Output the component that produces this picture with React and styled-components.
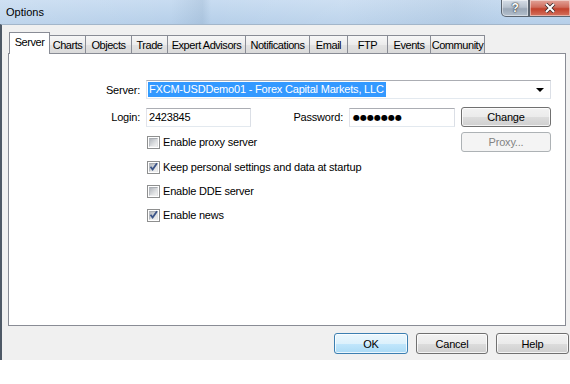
import React from 'react'
import styled, { createGlobalStyle } from 'styled-components'

const GlobalStyle = createGlobalStyle`
  html, body {
    margin: 0;
    background: #fff;
  }
  body {
    font-family: "Liberation Sans", Arial, sans-serif;
    font-size: 11px;
    letter-spacing: -0.2px;
    color: #000;
  }
`

const Window = styled.div`
  width: 570px;
  height: 360px;
  display: flex;
  flex-direction: column;
  overflow: hidden;
`

const TitleBar = styled.div`
  height: 24px;
  flex: none;
  display: flex;
  align-items: flex-start;
  background:
    linear-gradient(90deg, rgba(255,255,255,0.12) 0%, rgba(255,255,255,0) 30%,
      rgba(110,140,170,0.18) 35.5%, rgba(255,255,255,0) 37%, rgba(255,255,255,0.1) 60%,
      rgba(150,170,190,0.12) 80%, rgba(255,255,255,0) 90%),
    linear-gradient(#c8dcf1, #b6cfe9);
`

const Title = styled.div`
  padding: 6px 0 0 6px;
  letter-spacing: 0;
`

const CaptionButtons = styled.div`
  margin-left: auto;
  display: flex;
`

const CaptionButton = styled.div`
  width: ${p => p.$w}px;
  height: 17px;
  box-sizing: border-box;
  display: flex;
  align-items: center;
  justify-content: center;
  border: 1px solid #5b6570;
  border-top: none;
  border-radius: ${p => (p.$close ? '0' : '0 0 0 5px')};
  border-right: ${p => (p.$close ? 'none' : '1px solid #5b6570')};
  background: ${p =>
    p.$close
      ? 'linear-gradient(#e2a49a, #cf6c5c 45%, #c2412c 55%, #d5735f)'
      : 'linear-gradient(#d6dee8, #b7c2ce 45%, #9ba8b7 55%, #b4c0cd)'};
  box-shadow: inset 0 0 0 1px rgba(255,255,255,0.45);
  color: #fff;
  font-weight: bold;
  font-size: 12px;
  text-shadow: 0 0 2px #333, 0 0 1px #000;
`

const Body = styled.div`
  flex: 1;
  background: #f0f0f0;
  border-left: 2px solid #4e5966;
  border-top: 1px solid #a3b6ca;
  padding: 7px 0 0 6px;
  display: flex;
  flex-direction: column;
`

const TabStrip = styled.div`
  height: 21px;
  display: flex;
  align-items: flex-end;
  padding-left: 1px;
`

const Tab = styled.div`
  position: relative;
  z-index: ${p => (p.$active ? 2 : 0)};
  width: ${p => p.$w}px;
  height: ${p => (p.$active ? 22 : 18)}px;
  margin-right: -1px;
  margin-bottom: ${p => (p.$active ? '-1px' : '0')};
  padding-bottom: ${p => (p.$active ? '3px' : '0')};
  box-sizing: border-box;
  display: flex;
  align-items: center;
  justify-content: center;
  letter-spacing: -0.45px;
  white-space: nowrap;
  border: 1px solid #898c95;
  border-bottom: none;
  background: ${p =>
    p.$active ? '#fff' : 'linear-gradient(#f7f7f7, #ececec 50%, #e2e2e2 50%, #dadada)'};
`

const Panel = styled.div`
  position: relative;
  z-index: 1;
  width: 558px;
  height: 273px;
  box-sizing: border-box;
  border: 1px solid #898c95;
  background: #fff;
  padding: 26px 14px 0 0;
  display: flex;
  flex-direction: column;
`

const Row = styled.div`
  display: flex;
  align-items: center;
  height: ${p => p.$h || 20}px;
  margin-top: ${p => p.$mt || 0}px;
  padding-left: ${p => p.$pl || 0}px;
`

const Label = styled.div`
  flex: none;
  width: ${p => p.$w}px;
  margin-right: 6px;
  text-align: right;
`

const Combo = styled.div`
  flex: 1;
  height: 19px;
  box-sizing: border-box;
  border: 1px solid #abadb3;
  border-color: #abadb3 #dbdfe6 #e3e9ef #e2e3ea;
  background: #fff;
  display: flex;
  align-items: center;
  padding: 0 6px 0 1px;
`

const Selection = styled.span`
  background: #3399ff;
  color: #fff;
  padding: 1px 2px 2px 1px;
  line-height: 12px;
`

const Arrow = styled.span`
  margin-left: auto;
  width: 0;
  height: 0;
  border-left: 4px solid transparent;
  border-right: 4px solid transparent;
  border-top: 4px solid #000;
`

const Input = styled.div`
  flex: none;
  width: ${p => p.$w}px;
  height: 19px;
  box-sizing: border-box;
  border: 1px solid #abadb3;
  border-color: #abadb3 #dbdfe6 #e3e9ef #e2e3ea;
  background: #fff;
  display: flex;
  align-items: center;
  padding-left: ${p => p.$pad || 2}px;
`

const Dots = styled.span`
  font-family: "DejaVu Sans", sans-serif;
  font-size: 8px;
  letter-spacing: 0;
`

const Button = styled.button`
  flex: none;
  width: ${p => p.$w}px;
  height: ${p => p.$h || 21}px;
  margin-left: ${p => (p.$push ? 'auto' : `${p.$ml || 0}px`)};
  box-sizing: border-box;
  padding: 0;
  font: inherit;
  letter-spacing: inherit;
  color: ${p => (p.disabled ? '#838383' : '#000')};
  border: 1px solid ${p => (p.disabled ? '#adb2b5' : p.$primary ? '#3c7fb1' : '#707070')};
  border-radius: 3px;
  background: ${p =>
    p.disabled
      ? '#f4f4f4'
      : p.$primary
        ? 'linear-gradient(#ecf7fd, #dcf1fc 50%, #c2e7fc 50%, #abdaf5)'
        : 'linear-gradient(#f2f2f2, #ebebeb 50%, #dddddd 50%, #cfcfcf)'};
  box-shadow: ${p => (p.disabled ? 'none' : 'inset 0 0 0 1px rgba(255,255,255,0.75)')};
`

const CheckItem = styled.label`
  display: flex;
  align-items: center;
  gap: 3px;
`

const Box = styled.span`
  width: 13px;
  height: 13px;
  box-sizing: border-box;
  border: 1px solid #8e8f8f;
  background: #fff;
  padding: 1px;
  display: flex;
`

const BoxInner = styled.span`
  flex: 1;
  position: relative;
  background: linear-gradient(135deg, #b3b7bd, #dcdee0 60%, #f1f1f1);
  border: 1px solid #c6c9cc;
  border-color: #a9adb3 #e0e1e3 #ededee #b8bcc1;
`

const Mark = styled.svg`
  position: absolute;
  left: -2px;
  top: -3px;
`

const Footer = styled.div`
  display: flex;
  justify-content: flex-end;
  gap: 8px;
  margin-top: 7px;
  padding-right: 1px;
`

const tabs = [
  ['Server', 41],
  ['Charts', 37],
  ['Objects', 47],
  ['Trade', 37],
  ['Expert Advisors', 79],
  ['Notifications', 65],
  ['Email', 39],
  ['FTP', 41],
  ['Events', 44],
  ['Community', 55],
]

function Check({ checked, children }) {
  return (
    <CheckItem>
      <Box>
        <BoxInner>
          {checked && (
            <Mark width="11" height="11" viewBox="0 0 11 11">
              <path d="M2.5 5.8 L4.6 8.4 L9 2.2" fill="none" stroke="#3b5488" strokeWidth="1.8" />
            </Mark>
          )}
        </BoxInner>
      </Box>
      {children}
    </CheckItem>
  )
}

export default function App() {
  return (
    <Window>
      <GlobalStyle />
      <TitleBar>
        <Title>Options</Title>
        <CaptionButtons>
          <CaptionButton $w={28}>?</CaptionButton>
          <CaptionButton $w={41} $close>
            <svg width="12" height="10" viewBox="0 0 12 10">
              <path d="M2 1 L10 9 M10 1 L2 9" stroke="#3a2a2a" strokeWidth="3.6" />
              <path d="M2 1 L10 9 M10 1 L2 9" stroke="#fff" strokeWidth="2" />
            </svg>
          </CaptionButton>
        </CaptionButtons>
      </TitleBar>
      <Body>
        <TabStrip>
          {tabs.map(([name, w], i) => (
            <Tab key={name} $w={w} $active={i === 0}>{name}</Tab>
          ))}
        </TabStrip>
        <Panel>
          <Row $h={19}>
            <Label $w={131}>Server:</Label>
            <Combo>
              <Selection>FXCM-USDDemo01 - Forex Capital Markets, LLC</Selection>
              <Arrow />
            </Combo>
          </Row>
          <Row $mt={8}>
            <Label $w={131}>Login:</Label>
            <Input $w={105}>2423845</Input>
            <Label $w={92}>Password:</Label>
            <Input $w={106} $pad={3}><Dots>●●●●●●●</Dots></Input>
            <Button $w={90} $h={20} $ml={6}>Change</Button>
          </Row>
          <Row $mt={5} $pl={138}>
            <Check>Enable proxy server</Check>
            <Button $w={90} $h={20} $push disabled>Proxy...</Button>
          </Row>
          <Row $mt={5} $pl={138}>
            <Check checked>Keep personal settings and data at startup</Check>
          </Row>
          <Row $mt={4} $pl={138}>
            <Check>Enable DDE server</Check>
          </Row>
          <Row $mt={4} $pl={138}>
            <Check checked>Enable news</Check>
          </Row>
        </Panel>
        <Footer>
          <Button $w={74} $primary>OK</Button>
          <Button $w={72}>Cancel</Button>
          <Button $w={73}>Help</Button>
        </Footer>
      </Body>
    </Window>
  )
}
